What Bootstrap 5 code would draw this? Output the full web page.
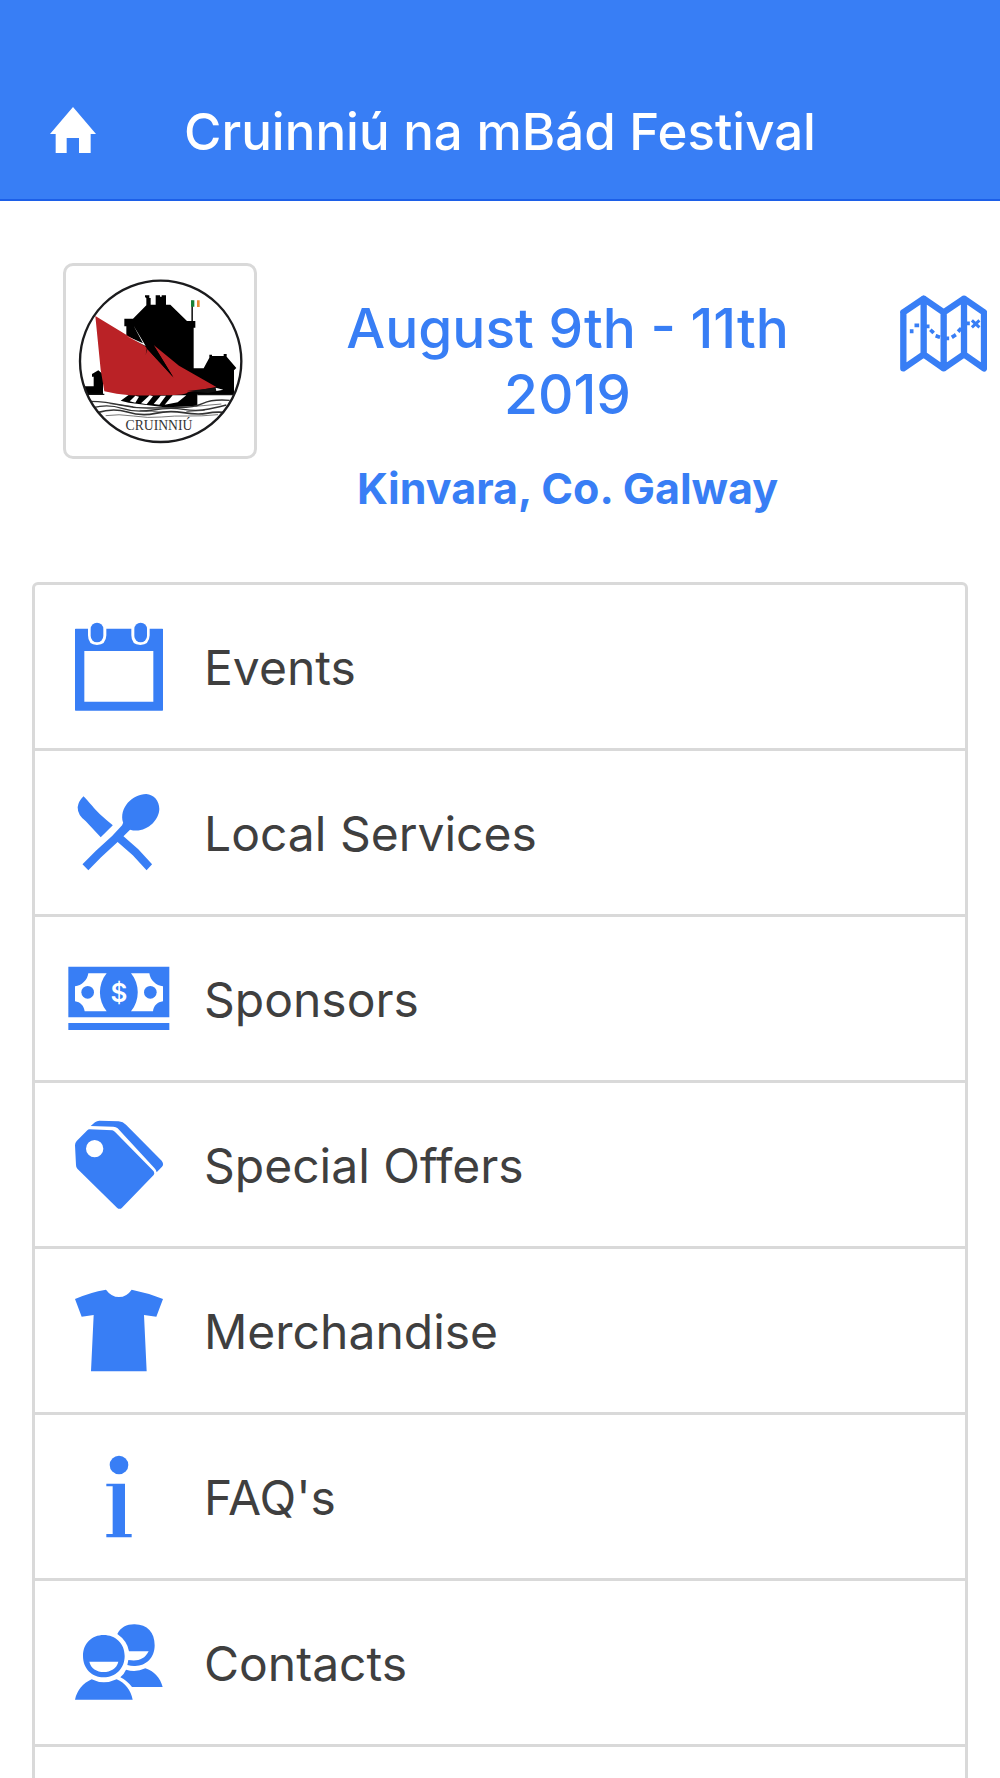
<!DOCTYPE html>
<html lang="en">
<head>
<meta charset="utf-8">
<meta name="viewport" content="width=device-width, initial-scale=1">
<title>Cruinniú na mBád Festival</title>
<link href="https://cdn.jsdelivr.net/npm/bootstrap@5.3.0/dist/css/bootstrap.min.css" rel="stylesheet">
<style>
  :root { --brand: #387ef5; --line: #d9d9d9; --ink: #3f3f3f; }
  body { font-family: Inter, "Liberation Sans", sans-serif; background: #fff; }
  svg { display: block; flex: none; }
  .topbar { background: var(--brand); border-bottom: 2px solid #1c5fe8; padding: 100px 50px 35px; }
  .topbar h1 { font-size: 51px; line-height: 64px; font-weight: 500; }
  .home-link { width: 46px; }
  .hero { padding: 62px 13px 0 63px; min-height: 381px; }
  .crest { border: 3px solid var(--line); border-radius: 10px; width: 194px; flex: none; }
  .when { padding: 32px 62px 0 40px; color: var(--brand); }
  .when h2 { font-size: 55px; line-height: 66px; font-weight: 500; margin-bottom: 35px; }
  .when h3 { font-size: 43px; line-height: 52px; font-weight: 700; }
  .map-link { color: var(--brand); padding-top: 32px; }
  .menu { margin: 0 32px; border-radius: 6px 6px 0 0; --bs-list-group-border-width: 3px; --bs-list-group-border-color: var(--line); --bs-list-group-border-radius: 6px; }
  .menu .list-group-item { min-height: 166px; padding: 2px 33px 0; gap: 34px; color: var(--ink); font-size: 48px; line-height: 60px; }
  .menu .list-group-item:first-child { min-height: 169px; }
  .menu .menu-rest { min-height: 0; border-bottom: 0; border-radius: 0; }
  .menu svg { width: 102px; height: 102px; fill: var(--brand); }
</style>
</head>
<body class="d-flex flex-column min-vh-100">

<header class="topbar d-flex align-items-center">
  <a class="home-link" href="#" aria-label="Home">
    <svg class="mb-1" width="46" height="46" viewBox="151 80 138 138" fill="#fff"><path d="M220 80L289 161H273V218H238V173H201V218H168V161H151Z"/></svg>
  </a>
  <h1 class="flex-fill text-center text-white m-0">Cruinniú na mBád Festival</h1>
  <span class="home-link" aria-hidden="true"></span>
</header>

<main class="d-flex flex-column flex-fill">
  <section class="hero d-flex align-items-start">
    <div class="crest">
      <svg width="188" height="190" viewBox="49 49 564 570" role="img" aria-label="Cruinniú crest">
        <defs><clipPath id="ring"><circle cx="333" cy="335" r="241"/></clipPath></defs>
        <g clip-path="url(#ring)">
          <path d="M230 262V230H224V207H250L290 167V146L286 142V137H299V145H303V165H318V137H331V141H336V137H349V165H362L412 214H437V234H432V356H462L479 324V315H487V319H522V313H531V321L560 355L553 362V434H100V410H132V381H127V373L146 362L160 374V434H230Z"/>
          <path d="M425 153H430V214H425Z" fill="#222"/>
          <path d="M424 152H434V171H424Z" fill="#168035"/><path d="M442 152H450V172H442Z" fill="#e88a32"/>
          <path d="M213 453L240 434L412 424L520 421L494 428L443 434V470L345 473L237 459Z"/>
          <path d="M137 199L284 288L292 293L288 316L293 298L370 381L312 286L388 348L500 412L414 428Q410 438 333 437Q252 440 201 432L164 425L153 360Z" fill="#ba2226"/>
          <path d="M245 217L291 296L372 384L310 284L250 216Z"/>
          <path d="M251 227L288 289L229 258L280 281Z" fill="#fff"/>
          <path d="M240 455L257 438L268 441L257 459ZM274 461L300 437L310 440L291 464ZM312 463L333 438H349L329 465ZM345 465L369 437H410L384 458Z" fill="#fff"/>
          <path d="M412 424L500 414L520 421L475 430Z" fill="#111"/><path d="M498 414L521 420L500 424Z" fill="#fff"/>
          <path d="M112 434H164M443 435H556" stroke="#111" stroke-width="4"/>
          <g fill="none" stroke="#333" stroke-width="4">
            <path d="M120 455Q170 456 213 466T300 475T388 474T460 461T540 452"/>
            <path d="M130 474Q175 462 217 476T310 481T401 479T478 478T530 466"/>
            <path d="M143 489Q190 474 233 487T317 491T401 489T470 491T522 488" stroke-width="5"/>
            <path d="M168 498Q207 492 251 499T335 502T414 499T505 495" stroke-width="2"/>
            <path d="M180 462L250 471M437 470L515 463M270 482L345 488M410 486L465 482" stroke-width="2"/>
          </g>
        </g>
        <circle cx="333" cy="335" r="242" fill="none" stroke="#1b1b1d" stroke-width="7"/>
        <text x="328" y="542" text-anchor="middle" font-family="Liberation Serif, serif" font-size="41" fill="#333">CRUINNIÚ</text>
      </svg>
    </div>
    <div class="when flex-fill text-center">
      <h2>August 9th - 11th 2019</h2>
      <h3 class="m-0">Kinvara, Co. Galway</h3>
    </div>
    <a class="map-link" href="#" aria-label="Map">
      <svg width="87" height="77" viewBox="60 75 261 231" fill="none" stroke="currentColor" stroke-linejoin="round" stroke-linecap="round">
        <path d="M70 127L131 86L191 127L252 86L312 127V253M70 127V295L131 253L191 295L252 253L312 295V253M131 86V253M191 127V295M252 86V253" stroke-width="19"/>
        <path d="M95 184V183M109 166H112M141 169H143M155 183L157 185M172 199L175 200M201 205H202M220 199L223 197M238 181L240 179M262 160H264" stroke-width="11" stroke-linecap="square"/>
        <path d="M279 154L295 169M295 154L279 169" stroke-width="9" stroke-linecap="square"/>
      </svg>
    </a>
  </section>

  <nav class="menu list-group flex-fill" aria-label="Festival">
    <a class="list-group-item d-flex align-items-center" href="#">
      <svg viewBox="144 141 306 306" aria-hidden="true"><path fill-rule="evenodd" d="M167 176H204V196Q204 225 231 225T259 196V176H334V196Q334 225 361 225T389 196V176H427Q429 176 429 178V420Q429 422 427 422H167Q165 422 165 420V178Q165 176 167 176ZM193 243V395H400V243Z"/><rect x="212" y="158" width="38" height="59" rx="19"/><rect x="343" y="158" width="38" height="59" rx="19"/></svg>
      <span>Events</span>
    </a>
    <a class="list-group-item d-flex align-items-center" href="#">
      <svg viewBox="140 69 296 306" preserveAspectRatio="none" aria-hidden="true"><path d="M185 109C200 125 218 148 232 162Q250 179 270 196L235 232L191 183Q168 166 168 142Q170 124 185 109Z"/><path d="M300 188C287 144 327 102 367 102C389 104 405 122 405 147C404 183 365 222 320 209L301 229L344 268L384 313L368 331L328 286L284 246L236 292L199 331L182 313L221 272L268 228L297 196Z"/></svg>
      <span>Local Services</span>
    </a>
    <a class="list-group-item d-flex align-items-center" href="#">
      <svg viewBox="144 57 306 306" aria-hidden="true"><path fill-rule="evenodd" d="M145 110H448V262H145ZM205 130C202 151 185 167 165 169V214C181 216 192 227 194 244H260C233 211 233 163 260 130ZM333 130C360 163 360 211 333 244H399C401 227 412 216 429 214V169C408 167 391 151 388 130Z"/><circle cx="203" cy="187" r="19"/><circle cx="391" cy="187" r="19"/><path d="M145 279H448V300H145Z"/><text x="297" y="215" text-anchor="middle" font-family="Inter, sans-serif" font-size="78" font-weight="600" style="fill:#fff">$</text></svg>
      <span>Sponsors</span>
    </a>
    <a class="list-group-item d-flex align-items-center" href="#">
      <svg viewBox="144 75 306 306" aria-hidden="true"><path fill-rule="evenodd" d="M208 118L277 121Q282 122 286 127L401 244Q405 250 401 255L306 353Q299 360 291 353L172 236Q168 232 168 225L165 166Q165 158 170 153L202 121Q205 118 208 118ZM224 150A26 26 0 1 0 224 202A26 26 0 1 0 224 150Z"/><path d="M212 108L225 97Q231 92 238 92L296 94Q309 95 318 104L425 212Q433 222 426 230L410 247Q409 240 403 234L293 115Q288 110 280 110Z"/></svg>
      <span>Special Offers</span>
    </a>
    <a class="list-group-item d-flex align-items-center" href="#">
      <svg viewBox="144 93 306 306" aria-hidden="true"><path d="M258 119Q274 141 297 141T335 119Q382 128 429 147L409 200L372 195L380 364H213L221 195L185 200L165 147Q210 127 258 119Z"/></svg>
      <span>Merchandise</span>
    </a>
    <a class="list-group-item d-flex align-items-center" href="#">
      <svg viewBox="144 81 306 306" aria-hidden="true"><circle cx="297" cy="135" r="28"/><path d="M259 191H315V342H335V352H259V342H278V199H259Z"/></svg>
      <span>FAQ's</span>
    </a>
    <a class="list-group-item d-flex align-items-center" href="#">
      <svg viewBox="144 69 306 306" aria-hidden="true"><path fill-rule="evenodd" d="M251 135C286 135 314 160 314 198C314 236 286 262 251 262C216 262 189 236 189 198C189 160 216 135 251 135ZM208 215C212 235 231 246 251 246S291 235 295 215Z"/><path d="M215 268Q251 286 290 268C315 278 333 301 338 329H165C171 302 188 280 215 268Z"/><path d="M292 132C302 112 320 103 342 103C381 102 404 127 404 166C404 204 377 230 342 228Q332 228 322 225L325 210C352 214 373 210 386 184H327Q322 153 292 132ZM318 239Q348 248 376 235C402 243 421 264 428 291H336Q321 272 301 262Q312 253 318 239Z"/></svg>
      <span>Contacts</span>
    </a>
    <div class="list-group-item menu-rest flex-fill"></div>
  </nav>
</main>

<script src="https://cdn.jsdelivr.net/npm/bootstrap@5.3.0/dist/js/bootstrap.bundle.min.js"></script>
</body>
</html>
